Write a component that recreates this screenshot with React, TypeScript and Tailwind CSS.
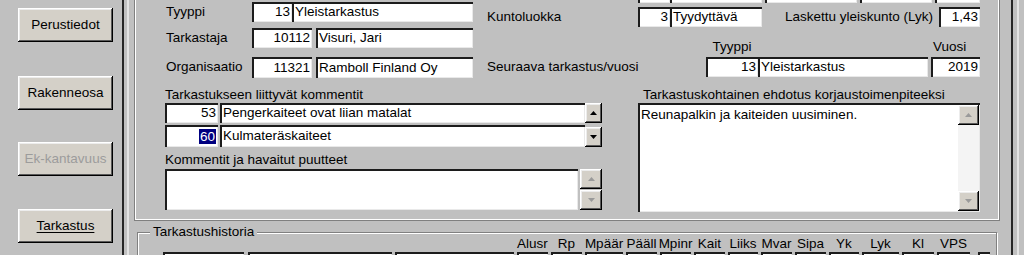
import React from "react";

const SUNKEN = "bg-white shadow-[inset_2px_2px_0_#1c1c1c,inset_-1px_-1px_0_#e9e9e9]";
const STUB = "bg-white shadow-[inset_2px_0_0_#1c1c1c,inset_-1px_-1px_0_#e9e9e9]";
const RAISED =
  "bg-[#d4d0c8] shadow-[inset_-1px_-1px_0_#000,inset_1px_1px_0_#fff,inset_-2px_-2px_0_#5a5a5a,inset_2px_2px_0_#ececec]";

function Field({
  className = "",
  right = false,
  children,
}: {
  className?: string;
  right?: boolean;
  children?: React.ReactNode;
}) {
  return (
    <div
      className={`${SUNKEN} flex items-center whitespace-nowrap overflow-hidden leading-[16px] shrink-0 ${
        right ? "justify-end pr-[2px]" : "pl-[3px]"
      } ${className}`}
    >
      {children}
    </div>
  );
}

function Arrow({ up, disabled }: { up?: boolean; disabled?: boolean }) {
  return (
    <svg width="7" height="4" viewBox="0 0 7 4">
      <path d={up ? "M3.5 0 L7 4 L0 4 Z" : "M0 0 L7 0 L3.5 4 Z"} fill={disabled ? "#9a9a9a" : "#000"} />
    </svg>
  );
}

function ScrollBtn({ up, disabled, className = "" }: { up?: boolean; disabled?: boolean; className?: string }) {
  return (
    <div className={`${RAISED} flex items-center justify-center shrink-0 ${className}`}>
      <Arrow up={up} disabled={disabled} />
    </div>
  );
}

function NavButton({
  children,
  className = "",
  disabled,
  underline,
}: {
  children: React.ReactNode;
  className?: string;
  disabled?: boolean;
  underline?: boolean;
}) {
  return (
    <button
      type="button"
      className={`${RAISED} w-[95px] h-[34px] flex items-center justify-center shrink-0 ${className}`}
    >
      <span
        className={
          disabled ? "text-[#9c9c9c]" : underline ? "underline underline-offset-[2px]" : ""
        }
      >
        {children}
      </span>
    </button>
  );
}

const columns: { ml: string; w: string; label?: string }[] = [
  { ml: "ml-[25px]", w: "w-[81px]" },
  { ml: "ml-[4px]", w: "w-[144px]" },
  { ml: "ml-[3px]", w: "w-[119px]" },
  { ml: "ml-[3px]", w: "w-[31px]", label: "Alusr" },
  { ml: "ml-[3px]", w: "w-[31px]", label: "Rp" },
  { ml: "ml-[3px]", w: "w-[38px]", label: "Mpäär" },
  { ml: "ml-[3px]", w: "w-[31px]", label: "Pääll" },
  { ml: "ml-[3px]", w: "w-[31px]", label: "Mpinr" },
  { ml: "ml-[3px]", w: "w-[31px]", label: "Kait" },
  { ml: "ml-[3px]", w: "w-[30px]", label: "Liiks" },
  { ml: "ml-[3px]", w: "w-[31px]", label: "Mvar" },
  { ml: "ml-[3px]", w: "w-[31px]", label: "Sipa" },
  { ml: "ml-[3px]", w: "w-[30px]", label: "Yk" },
  { ml: "ml-[3px]", w: "w-[37px]", label: "Lyk" },
  { ml: "ml-[3px]", w: "w-[32px]", label: "Kl" },
  { ml: "ml-[3px]", w: "w-[33px]", label: "VPS" },
  { ml: "ml-[8px]", w: "w-[12px]" },
];

export default function App() {
  return (
    <div className="w-[1024px] h-[255px] overflow-hidden bg-[#c0c0c0] flex text-black text-[13.5px] font-['Liberation_Sans',Arial,sans-serif]">
      {/* Left navigation */}
      <div className="w-[122px] shrink-0 flex flex-col items-start pl-[18px]">
        <NavButton className="mt-[8px]">Perustiedot</NavButton>
        <NavButton className="mt-[34px]">Rakenneosa</NavButton>
        <NavButton className="mt-[32px]" disabled>
          Ek-kantavuus
        </NavButton>
        <NavButton className="mt-[33px]" underline>
          Tarkastus
        </NavButton>
      </div>

      {/* Splitter */}
      <div className="w-[2px] shrink-0 bg-[#262626]" />
      <div className="w-[3px] shrink-0" />
      <div className="w-[2px] shrink-0 bg-[#e4e4e4]" />
      <div className="w-[5px] shrink-0" />

      {/* Main area */}
      <div className="w-[866px] shrink-0 flex flex-col">
        {/* Upper panel */}
        <div className="h-[221px] shrink-0 border-x border-b border-[#808080]">
          <div className="h-full border-x border-b border-white flex flex-col">
            {/* Top fields */}
            <div className="flex h-[78px] shrink-0">
              <div className="ml-[30px] w-[307px] shrink-0 flex flex-col">
                <div className="mt-[2px] h-[20px] flex items-center">
                  <div className="w-[86px] shrink-0">Tyyppi</div>
                  <Field right className="w-[40px] h-full">13</Field>
                  <Field className="w-[181px] h-full">Yleistarkastus</Field>
                </div>
                <div className="mt-[6px] h-[20px] flex items-center">
                  <div className="w-[86px] shrink-0">Tarkastaja</div>
                  <Field right className="w-[60px] h-full">10112</Field>
                  <Field className="ml-[4px] w-[157px] h-full">Visuri, Jari</Field>
                </div>
                <div className="mt-[9px] h-[21px] flex items-center">
                  <div className="w-[86px] shrink-0">Organisaatio</div>
                  <Field right className="w-[60px] h-full">11321</Field>
                  <Field className="ml-[4px] w-[157px] h-full">Ramboll Finland Oy</Field>
                </div>
              </div>

              <div className="ml-[14px] w-[493px] shrink-0 flex flex-col">
                <div className="flex h-[3px] ml-[151px]">
                  <div className={`${STUB} w-[32px]`} />
                  <div className={`${STUB} w-[92px]`} />
                  <div className={`${STUB} ml-[3px] w-[92px]`} />
                  <div className={`${STUB} ml-[3px] w-[72px]`} />
                  <div className={`${STUB} ml-[3px] w-[45px]`} />
                </div>
                <div className="mt-[4px] h-[20px] flex items-center">
                  <div className="w-[151px] shrink-0">Kuntoluokka</div>
                  <Field right className="w-[32px] h-full">3</Field>
                  <Field className="w-[92px] h-full">Tyydyttävä</Field>
                  <div className="flex-1 text-right pr-[6px] whitespace-nowrap">Laskettu yleiskunto (Lyk)</div>
                  <Field right className="w-[41px] h-full">1,43</Field>
                </div>
                <div className="mt-[12px] h-[16px] flex items-center leading-[16px]">
                  <div className="w-[219px] shrink-0" />
                  <div className="w-[52px] shrink-0 text-center">Tyyppi</div>
                  <div className="w-[174px] shrink-0" />
                  <div className="pl-[1px]">Vuosi</div>
                </div>
                <div className="mt-[2px] h-[20px] flex items-center">
                  <div className="w-[219px] shrink-0">Seuraava tarkastus/vuosi</div>
                  <Field right className="w-[52px] h-full">13</Field>
                  <Field className="w-[170px] h-full">Yleistarkastus</Field>
                  <Field right className="ml-[3px] w-[49px] h-full">2019</Field>
                </div>
              </div>
            </div>

            {/* Lower fields */}
            <div className="flex">
              <div className="ml-[29px] w-[437px] shrink-0 flex flex-col">
                <div className="mt-[9px] h-[16px] leading-[16px] whitespace-nowrap">
                  Tarkastukseen liittyvät kommentit
                </div>
                <div className="h-[44px] flex">
                  <div className="w-[420px] shrink-0 flex flex-col gap-[2px]">
                    <div className="h-[20px] flex">
                      <Field right className="w-[53px] h-full">53</Field>
                      <Field className="ml-[2px] flex-1 h-full">Pengerkaiteet ovat liian matalat</Field>
                    </div>
                    <div className="h-[22px] flex">
                      <Field right className="w-[53px] h-full">
                        <span className="bg-[#000080] text-white px-[1px] leading-[15px]">60</span>
                      </Field>
                      <Field className="ml-[2px] flex-1 h-full">Kulmateräskaiteet</Field>
                    </div>
                  </div>
                  <div className="w-[17px] shrink-0 flex flex-col justify-between">
                    <ScrollBtn up className="h-[20px]" />
                    <ScrollBtn className="h-[20px]" />
                  </div>
                </div>
                <div className="mt-[5px] h-[16px] leading-[16px] whitespace-nowrap">
                  Kommentit ja havaitut puutteet
                </div>
                <div className="mt-[1px] h-[41px] flex">
                  <div className={`${SUNKEN} w-[413px] h-full shrink-0`} />
                  <div className="ml-[2px] w-[22px] shrink-0 flex flex-col gap-[1px]">
                    <ScrollBtn up disabled className="h-[20px]" />
                    <ScrollBtn disabled className="h-[20px]" />
                  </div>
                </div>
              </div>

              <div className="ml-[36px] w-[342px] shrink-0 flex flex-col">
                <div className="mt-[9px] h-[16px] leading-[16px] pl-[5px] whitespace-nowrap">
                  Tarkastuskohtainen ehdotus korjaustoimenpiteeksi
                </div>
                <div className={`${SUNKEN} h-[109px] flex`}>
                  <div className="flex-1 pl-[3px] pt-[4px] leading-[16px]">Reunapalkin ja kaiteiden uusiminen.</div>
                  <div className="w-[21px] shrink-0 mt-[2px] mb-[1px] mr-[1px] bg-[#f4f4f4] flex flex-col justify-between">
                    <ScrollBtn up disabled className="h-[20px]" />
                    <ScrollBtn disabled className="h-[20px]" />
                  </div>
                </div>
              </div>
            </div>
          </div>
        </div>

        {/* Inspection history group */}
        <fieldset className="mt-[7px] mx-[3px] border border-[#808080] shadow-[inset_1px_1px_0_#fff,1px_1px_0_#fff] shrink-0">
          <legend className="ml-[12px] px-[3px] leading-[8px] h-[8px] bg-[#c0c0c0] whitespace-nowrap">
            Tarkastushistoria
          </legend>
          <div className="flex">
            {columns.map((c, i) => (
              <div key={i} className={`${c.ml} ${c.w} shrink-0 flex flex-col items-center`}>
                <div className="h-[16px] leading-[16px] whitespace-nowrap">{c.label ?? ""}</div>
                <div className={`${SUNKEN} w-full h-[12px]`} />
              </div>
            ))}
          </div>
        </fieldset>
      </div>

      {/* Right frame */}
      <div className="w-[11px] shrink-0" />
      <div className="w-[2px] shrink-0 bg-[#262626]" />
      <div className="w-[4px] shrink-0" />
      <div className="w-[2px] shrink-0 bg-[#e4e4e4]" />
    </div>
  );
}
